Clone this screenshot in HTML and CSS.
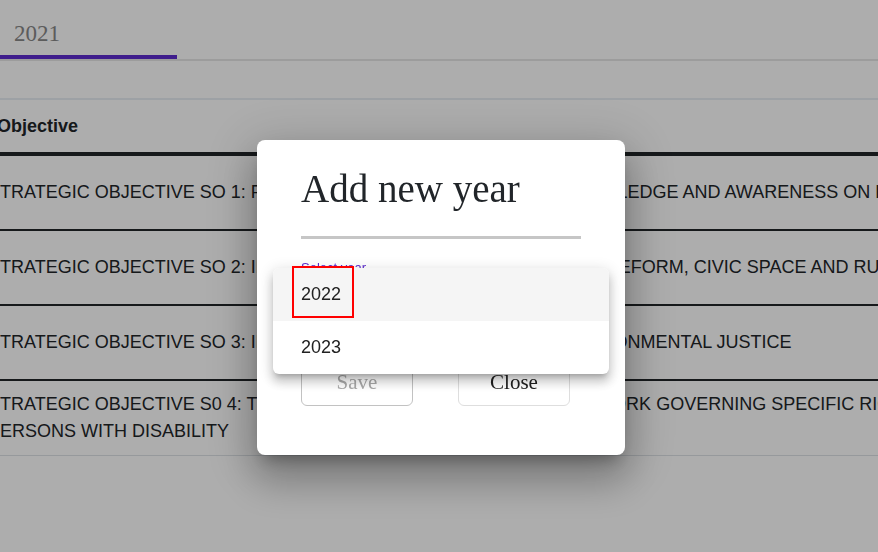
FILE: index.html
```html
<!DOCTYPE html>
<html lang="en">
<head>
<meta charset="utf-8">
<title>Add new year</title>
<link rel="stylesheet" href="styles.css">
</head>
<body>
<div class="page">
  <div class="tabs">
    <div class="tab active">2021</div>
  </div>
  <div class="toolbar"></div>
  <div class="table">
    <div class="thead"><div class="th">Objective</div></div>
    <div class="row"><div class="cell">STRATEGIC OBJECTIVE SO 1: PROMOTE AND EXPANDED PUBLIC KNOWLEDGE AND AWARENESS ON HUMAN RIGHTS</div></div>
    <div class="row"><div class="cell">STRATEGIC OBJECTIVE SO 2: INFLUENCE PUBLIC POLICY, AND LEGAL REFORM, CIVIC SPACE AND RULE OF LAW</div></div>
    <div class="row"><div class="cell">STRATEGIC OBJECTIVE SO 3: IMPROVE ACCESS TO SOCIAL AND ENVIRONMENTAL JUSTICE</div></div>
    <div class="row last"><div class="cell">STRATEGIC OBJECTIVE S0 4: TO ADVOCATE FOR THE POLICY FRAMEWORK GOVERNING SPECIFIC RIGHTS OF<br>PERSONS WITH DISABILITY</div></div>
  </div>
</div>

<div class="backdrop"></div>

<div class="modal">
  <h1 class="modal-title">Add new year</h1>
  <div class="divider"></div>
  <div class="label">Select year</div>
  <div class="field"></div>
  <div class="actions">
    <button class="btn disabled" type="button">Save</button>
    <button class="btn close" type="button">Close</button>
  </div>
</div>

<div class="menu">
  <div class="menu-item hover">2022</div>
  <div class="menu-item">2023</div>
</div>

<div class="focus-ring"></div>
</body>
</html>
```

FILE: styles.css
```css
html, body {
  margin: 0;
  height: 100%;
  overflow: hidden;
  background: #fff;
}

body {
  font-family: "Liberation Sans", Arial, sans-serif;
  color: #212529;
}

.page {
  width: 100%;
  overflow: hidden;
}

.tabs {
  display: flex;
  border-bottom: 2px solid #e6e6e6;
}

.tab {
  width: 177px;
  height: 42px;
  padding-top: 13px;
  padding-left: 14px;
  box-sizing: content-box;
  display: flex;
  align-items: center;
  font-family: "Liberation Serif", "Times New Roman", serif;
  font-size: 23px;
  color: #888;
}

.tab.active {
  border-bottom: 4px solid #5d2cce;
  width: 163px;
}

.toolbar {
  height: 37px;
  border-bottom: 2px solid #e8eef4;
}

.thead {
  height: 52px;
  display: flex;
  align-items: center;
  border-bottom: 4px solid #212529;
  font-weight: 700;
  font-size: 18px;
}

.th {
  margin-left: -3px;
}

.row {
  display: flex;
  align-items: center;
  min-height: 53px;
  padding: 10px 0;
  border-bottom: 2px solid #212529;
  font-size: 18px;
  line-height: 27px;
  white-space: nowrap;
}

.row.last {
  border-bottom: 1px solid #dee2e6;
}

.cell {
  margin-left: -12px;
}

.backdrop {
  position: fixed;
  inset: 0;
  background: rgba(0, 0, 0, 0.32);
}

.modal {
  position: absolute;
  left: 257px;
  top: 140px;
  width: 368px;
  box-sizing: border-box;
  padding: 25px 44px 49px;
  background: #fff;
  border-radius: 8px;
  box-shadow: 0 11px 15px -7px rgba(0, 0, 0, 0.28),
              0 24px 38px 3px rgba(0, 0, 0, 0.2),
              0 9px 46px 8px rgba(0, 0, 0, 0.16);
}

.modal-title {
  margin: 0;
  font-family: "Liberation Serif", "Times New Roman", serif;
  font-weight: 400;
  font-size: 39px;
  line-height: 48px;
  color: #212529;
}

.divider {
  height: 3px;
  margin-top: 23px;
  background: #c6c6c6;
}

.label {
  margin-top: 21px;
  font-size: 13px;
  line-height: 16px;
  color: #5d2cce;
}

.field {
  height: 50px;
}

.actions {
  display: flex;
  gap: 45px;
  margin-top: 32px;
}

.btn {
  width: 112px;
  height: 48px;
  box-sizing: border-box;
  border: 1px solid #c2c2c2;
  border-radius: 6px;
  background: #fff;
  display: flex;
  align-items: center;
  justify-content: center;
  padding: 0;
  font-family: "Liberation Serif", "Times New Roman", serif;
  font-size: 21px;
  color: #212121;
}

.btn.disabled {
  color: #a9a9a9;
}

.btn.close {
  border-color: #dedede;
}

.menu {
  position: absolute;
  left: 273px;
  top: 268px;
  width: 336px;
  background: #fff;
  border-radius: 6px;
  overflow: hidden;
  box-shadow: 0 5px 5px -3px rgba(0, 0, 0, 0.2),
              0 8px 10px 1px rgba(0, 0, 0, 0.14),
              0 3px 14px 2px rgba(0, 0, 0, 0.12);
}

.menu-item {
  height: 53px;
  display: flex;
  align-items: center;
  padding-left: 28px;
  font-size: 18px;
  color: #212121;
}

.menu-item.hover {
  background: #f5f5f5;
}

.focus-ring {
  position: absolute;
  left: 292px;
  top: 266px;
  width: 62px;
  height: 52px;
  box-sizing: border-box;
  border: 2px solid #ff0000;
}
```
